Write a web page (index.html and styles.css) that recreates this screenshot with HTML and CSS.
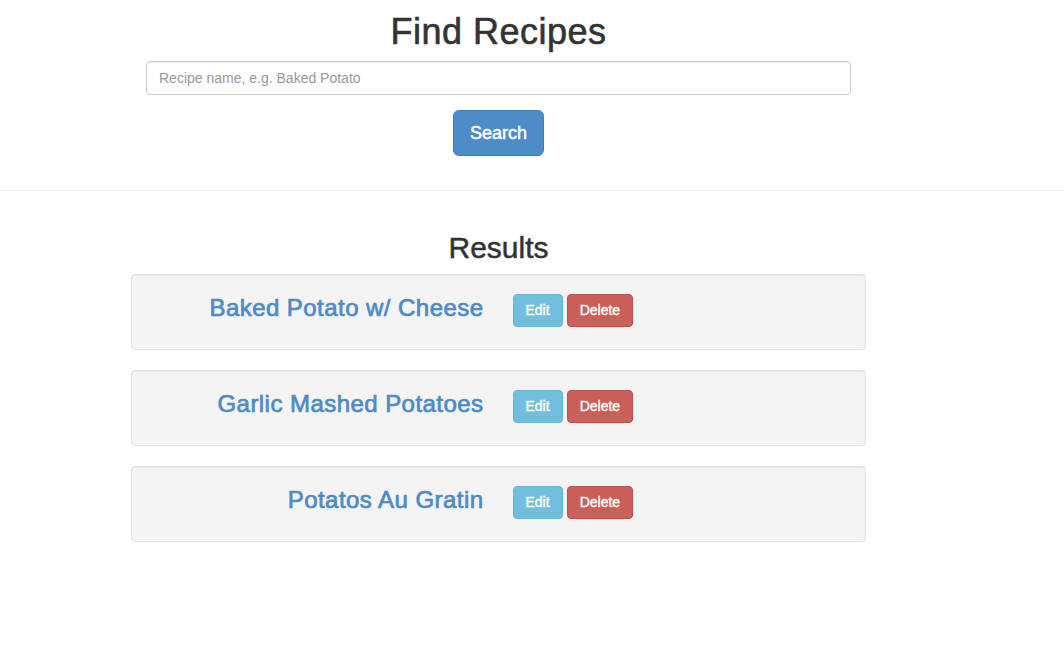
FILE: index.html
```html
<!DOCTYPE html>
<html>
<head>
<meta charset="utf-8">
<title>Find Recipes</title>
<link rel="stylesheet" href="styles.css">
</head>
<body>
  <header class="finder">
    <div class="column">
      <h1 class="page-title">Find Recipes</h1>
      <div class="search-form">
        <input class="search-input" type="text" placeholder="Recipe name, e.g. Baked Potato">
        <button class="btn btn-primary btn-lg">Search</button>
      </div>
    </div>
  </header>
  <hr class="divider">
  <main class="column">
    <h2 class="results-title">Results</h2>
    <div class="recipe-card">
      <div class="recipe-name"><a href="#">Baked Potato w/ Cheese</a></div>
      <div class="recipe-actions"><button class="btn btn-info">Edit</button><button class="btn btn-danger">Delete</button></div>
    </div>
    <div class="recipe-card">
      <div class="recipe-name"><a href="#">Garlic Mashed Potatoes</a></div>
      <div class="recipe-actions"><button class="btn btn-info">Edit</button><button class="btn btn-danger">Delete</button></div>
    </div>
    <div class="recipe-card">
      <div class="recipe-name"><a href="#">Potatos Au Gratin</a></div>
      <div class="recipe-actions"><button class="btn btn-info">Edit</button><button class="btn btn-danger">Delete</button></div>
    </div>
  </main>
</body>
</html>
```
FILE: styles.css
```css
* { box-sizing: border-box; }
body {
  margin: 0;
  font-family: "Liberation Sans", Arial, sans-serif;
  font-size: 14px;
  color: #333;
  background: #fff;
}
.column {
  width: 735px;
  margin-left: 131px;
}
.finder { padding-bottom: 34px; }
.page-title {
  margin: 12px 0 0;
  font-size: 36px;
  font-weight: normal;
  line-height: 39.6px;
  letter-spacing: 0.5px;
  text-align: center;
  color: #333;
  -webkit-text-stroke: 0.6px #333;
}
.search-form {
  display: flex;
  flex-direction: column;
  align-items: center;
  gap: 15px;
  margin-top: 9px;
}
.search-input {
  width: 705px;
  height: 34px;
  padding: 6px 12px;
  font-family: inherit;
  font-size: 14px;
  color: #555;
  border: 1px solid #ccc;
  border-radius: 4px;
  box-shadow: inset 0 1px 1px rgba(0,0,0,.075);
}
.search-input::placeholder { color: #999; }
.btn {
  display: inline-block;
  font-family: inherit;
  font-size: 14px;
  line-height: 20px;
  padding: 6px 12px;
  border: 1px solid transparent;
  border-radius: 4px;
  color: #fff;
  cursor: pointer;
  -webkit-text-stroke: 0.35px #fff;
}
.btn-lg {
  font-size: 18px;
  line-height: 24px;
  padding: 10px 16px;
  border-radius: 6px;
  -webkit-text-stroke: 0.5px #fff;
}
.btn-primary { background: #4d8bc9; border-color: #3f7fbe; }
.btn-info { background: #72bfdd; border-color: #63b6d6; }
.btn-danger { background: #c95f58; border-color: #bd524b; }
.divider {
  margin: 0;
  border: 0;
  border-top: 1px solid #eee;
}
.results-title {
  margin: 40px 0 10px;
  font-size: 30px;
  font-weight: normal;
  line-height: 33px;
  text-align: center;
  color: #333;
  -webkit-text-stroke: 0.5px #333;
}
.recipe-card {
  display: flex;
  min-height: 76px;
  margin-bottom: 20px;
  padding: 19px 0;
  background: #f4f4f4;
  border: 1px solid #e3e3e3;
  border-radius: 4px;
  box-shadow: inset 0 1px 1px rgba(0,0,0,.05);
}
.recipe-name {
  width: 50%;
  padding-right: 15px;
  text-align: right;
  font-size: 24px;
  line-height: 26px;
  margin-top: 1px;
}
.recipe-name a {
  color: #4e8ac6;
  text-decoration: none;
  font-weight: normal;
  letter-spacing: 0.45px;
  -webkit-text-stroke: 0.7px #4e8ac6;
}
.recipe-actions {
  width: 50%;
  padding-left: 14px;
  display: flex;
  align-items: flex-start;
  gap: 4px;
}
.recipe-actions .btn { height: 33px; padding-top: 5px; padding-bottom: 6px; }
```
